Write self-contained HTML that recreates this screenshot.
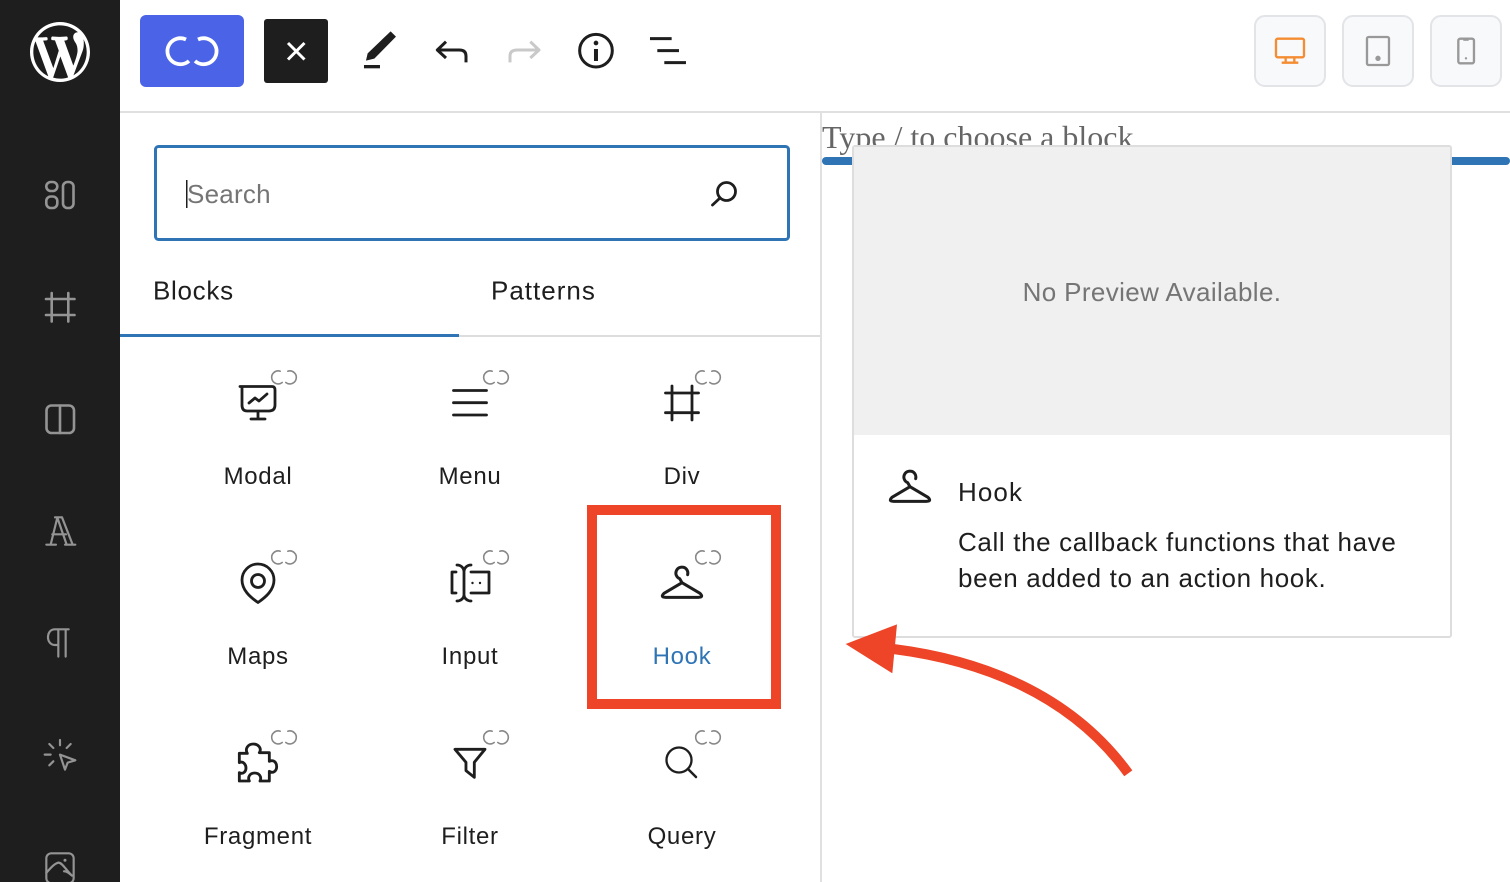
<!DOCTYPE html>
<html lang="en"><head><meta charset="utf-8"><title>Block inserter</title>
<style>
html,body{margin:0;padding:0;background:#fff;width:1510px;height:882px;overflow:hidden}
svg{display:block;position:absolute;left:0;top:0}
text{font-family:"Liberation Sans",sans-serif;fill:#1e1e1e}
.lb{font-size:24px;letter-spacing:.7px;text-anchor:middle;-webkit-text-stroke:.2px currentColor;color:#1e1e1e}
.tx{font-size:26px;letter-spacing:.64px;-webkit-text-stroke:.15px #1e1e1e}
.ic{fill:none;stroke:#1e1e1e;stroke-width:2.8;stroke-linecap:round;stroke-linejoin:round}
.z{fill:none;stroke:#1e1e1e;stroke-width:9;stroke-linejoin:round}
.sb{fill:none;stroke:#949494;stroke-width:2.6;stroke-linecap:round;stroke-linejoin:round}
.sz{fill:none;stroke:#949494;stroke-width:6.5;stroke-linecap:round;stroke-linejoin:round}
.lp{fill:none;stroke:#888;stroke-width:1.6;stroke-linecap:round}
</style></head><body>
<svg width="1510" height="882" viewBox="0 0 1510 882" xmlns="http://www.w3.org/2000/svg">
<defs>
<g id="loop"><path class="lp" d="M-3.800 -5.800A6.500 6.500 0 1 0 -1.800 5.500"/><path class="lp" d="M3.800 -5.800A6.500 6.500 0 1 1 1.800 5.500"/></g>
<g id="hook"><path class="z" transform="translate(580,500) scale(.3333)" stroke-linecap="round" d="M323 224A18 18 0 1 0 299 236L306 248L360 280Q372 292 355 292H257Q240 292 252 280L306 248"/></g>
</defs>

<!-- Sidebar -->
<rect x="0" y="0" width="120" height="882" fill="#1e1e1e"/>
<path transform="translate(30,22) scale(3)" fill="#fff" d="M20 10c0-5.51-4.49-10-10-10C4.48 0 0 4.49 0 10c0 5.52 4.48 10 10 10 5.51 0 10-4.48 10-10zM7.78 15.37L4.37 6.22c.55-.02 1.17-.08 1.17-.08.5-.06.44-1.13-.06-1.11 0 0-1.45.11-2.37.11-.18 0-.37 0-.58-.01C4.12 2.69 6.87 1.11 10 1.11c2.33 0 4.45.87 6.05 2.34-.68-.11-1.65.39-1.65 1.58 0 .74.45 1.36.9 2.1.35.61.55 1.36.55 2.46 0 1.49-1.4 5-1.4 5l-3.03-8.37c.54-.02.82-.17.82-.17.5-.05.44-1.25-.06-1.22 0 0-1.44.12-2.38.12-.87 0-2.33-.12-2.33-.12-.5-.03-.56 1.2-.06 1.22l.92.08 1.26 3.41zM17.41 10c.24-.64.74-1.87.43-4.25.7 1.29 1.05 2.71 1.05 4.25 0 3.29-1.73 6.24-4.4 7.78.97-2.59 1.94-5.2 2.92-7.78zM6.1 18.09C3.12 16.65 1.11 13.53 1.11 10c0-1.3.23-2.48.72-3.59C3.25 10.3 4.67 14.2 6.1 18.09zm4.03-6.63l2.58 6.98c-.86.29-1.76.45-2.71.45-.79 0-1.57-.11-2.29-.33.81-2.38 1.62-4.74 2.42-7.1z"/>
<rect class="sb" x="46.300" y="182" width="11" height="9" rx="4.500"/>
<rect class="sb" x="46.300" y="196.500" width="11" height="11.500" rx="4.500"/>
<rect class="sb" x="63" y="182" width="10.500" height="26" rx="4.500"/>
<path class="sb" d="M51.700 293V321.500M68.300 293V321.500M46 299H74.500M46 315H74.500"/>
<rect class="sb" x="46.500" y="405.500" width="27.500" height="27.500" rx="5"/><path class="sb" d="M60 405.500V433"/>
<g transform="translate(0,441) scale(.3333)">
<path class="sz" d="M139 311H168M195 311H226M152 311L172 230M165 229H186M172 230L200 311M186 229L218 311M157 280H198"/>
<path class="sz" d="M175 565V647M197 565V647M206 565H165C150 565 144 577 144 589C144 601 152 612 165 612H175"/>
<path class="sz" d="M180 897V913M148 909L160 921M212 909L200 921M134 941H152M148 973L160 961M180 941L226 958L203 965L195 986Z"/>
<rect class="sz" x="139" y="1237" width="82" height="90" rx="15"/>
<path class="sz" d="M139 1296C152 1280 165 1266 176 1265C188 1266 200 1290 216 1304C208 1297 200 1290 192 1291"/>
<circle cx="195" cy="1258" r="4.500" fill="#949494"/>
</g>

<!-- Top bar -->
<rect x="120" y="111" width="1390" height="2" fill="#e0e0e0"/>
<rect x="140" y="15" width="104" height="72" rx="6" fill="#4a63e7"/>
<path d="M186 39.500A13 13 0 1 0 189 61M198 39.500A13 13 0 1 1 195 61" fill="none" stroke="#fff" stroke-width="3.800"/>
<rect x="264" y="19" width="64" height="64" rx="3" fill="#1e1e1e"/>
<path d="M288 43L304.500 59.500M304.500 43L288 59.500" stroke="#fff" stroke-width="3"/>
<g transform="translate(130,0) scale(.3333)">
<path fill="#1e1e1e" d="M782 94L798 110L733 176L708 182L713 160Z"/><rect x="702" y="195" width="48" height="10" fill="#1e1e1e"/>
</g>
<g transform="translate(420,0) scale(.3333)">
<path class="z" d="M78 125L52 150L78 174M52 150H118Q138 150 138 168V187"/>
<path class="z" style="stroke:#c9c9c9" d="M331 125L357 150L331 174M357 150H292Q270 150 270 168V187"/>
<circle class="z" cx="528" cy="152" r="49"/><circle cx="528" cy="129" r="7" fill="#1e1e1e"/><rect x="522" y="147" width="12" height="36" fill="#1e1e1e"/>
<path class="z" d="M690 116H755M712 152H777M733 188H798"/>
</g>
<g fill="#f8f9fb" stroke="#e2e4e8" stroke-width="2">
<rect x="1255" y="16" width="70" height="70" rx="10"/><rect x="1343" y="16" width="70" height="70" rx="10"/><rect x="1431" y="16" width="70" height="70" rx="10"/>
</g>
<g transform="translate(1240,0) scale(.3333)" fill="none" stroke-width="7" stroke-linejoin="round">
<g stroke="#f48c32"><rect x="108" y="116" width="84" height="56" rx="5"/><path d="M137 172V188M163 172V188M125 188H175"/></g>
<g stroke="#999"><rect x="381" y="111" width="66" height="84" rx="5"/><rect x="655" y="116" width="47" height="74" rx="6"/><path d="M670 119H686"/></g>
<circle cx="414" cy="175" r="8" fill="#999"/><circle cx="678" cy="175" r="3.500" fill="#999"/>
</g>

<!-- Inserter -->
<rect x="820" y="113" width="2" height="769" fill="#e0e0e0"/>
<rect x="155.500" y="146.500" width="633" height="93" rx="3" fill="#fff" stroke="#2f74b5" stroke-width="3"/>
<rect x="186" y="180" width="1.500" height="28" fill="#1e1e1e"/>
<text x="187" y="203" style="font-size:26px;letter-spacing:.25px;fill:#757575">Search</text>
<circle class="ic" cx="726.500" cy="191.500" r="9"/><path class="ic" d="M720 198L712.500 205"/>
<text x="153" y="299.500" style="font-size:26px;letter-spacing:.7px;-webkit-text-stroke:.4px #1e1e1e">Blocks</text>
<text x="491" y="299.500" style="font-size:26px;letter-spacing:1px;-webkit-text-stroke:.4px #1e1e1e">Patterns</text>
<rect x="120" y="335" width="700" height="2" fill="#ddd"/>
<rect x="120" y="334" width="339" height="3" fill="#2f74b5"/>

<!-- grid -->
<use href="#loop" x="277.500" y="377" style="display:none"/>
<use href="#loop" x="284" y="377"/><use href="#loop" x="496" y="377"/><use href="#loop" x="708" y="377"/>
<use href="#loop" x="284" y="557"/><use href="#loop" x="496" y="557"/><use href="#loop" x="708" y="557"/>
<use href="#loop" x="284" y="737"/><use href="#loop" x="496" y="737"/><use href="#loop" x="708" y="737"/>

<text class="lb" x="258" y="484">Modal</text><text class="lb" x="470" y="484">Menu</text><text class="lb" x="682" y="484">Div</text>
<text class="lb" x="258" y="664">Maps</text><text class="lb" x="470" y="664">Input</text><text class="lb" x="682" y="664" style="fill:#2f74b5;color:#2f74b5">Hook</text>
<text class="lb" x="258" y="844">Fragment</text><text class="lb" x="470" y="844">Filter</text><text class="lb" x="682" y="844">Query</text>

<!-- Modal -->
<path class="ic" d="M240 386.500H272Q275 386.500 275 390V405Q275 411 269 411H247Q242 411 242 405V387M258 411V419M251 419H265M249 403L255 398L259 401L267 394"/>
<!-- Menu -->
<path class="ic" d="M453.500 390.500H486.500M453.500 402.700H486.500M453.500 415H486.500"/>
<!-- Div -->
<path class="ic" d="M672 386V420M692 386V420M665.500 393H698.500M665.500 412.700H698.500"/>
<!-- Maps -->
<path class="ic" d="M258 602.500C250 597 242 590 242 580A16 16 0 0 1 274 580C274 590 266 597 258 602.500Z"/><circle class="ic" cx="258" cy="581" r="6.500"/>
<!-- Input -->
<path class="ic" d="M457 565C461 565 464 568 464 572V595C464 598 461 601 457 601M471 565C467 565 464 568 464 572M464 595C464 598 467 601 471 601M456 572H452V593H456M471 572H489V593H471"/>
<circle cx="472.500" cy="583" r="1.200" fill="#1e1e1e"/><circle cx="480" cy="583" r="1.200" fill="#1e1e1e"/>
<!-- Hook -->
<use href="#hook"/>
<!-- Fragment -->
<path class="z" style="stroke-width:8.500" transform="translate(210,720) scale(.3333)" d="M88 100H112C104 86 114 72 130 72S156 86 148 98H178V124C192 118 200 128 200 140S190 162 178 154V183H150C156 171 148 159 134 159S112 171 118 183H88V158C100 164 108 154 108 144S100 122 88 128Z"/>
<!-- Filter -->
<path class="z" style="stroke-width:8.500" transform="translate(210,720) scale(.3333)" d="M735 88H825L793 127V172L768 152V127Z"/>
<!-- Query -->
<circle class="ic" style="stroke-width:2.300" cx="679" cy="760" r="12.500"/><path class="ic" style="stroke-width:2.500" d="M688 769L696 777"/>

<!-- Canvas -->
<text x="822" y="148" style="font-family:'Liberation Serif',serif;font-size:32px;fill:#666;-webkit-text-stroke:.2px #666">Type / to choose a block</text>
<rect x="822" y="157" width="688" height="8" rx="4" fill="#2f74b5"/>
<rect x="853" y="146" width="598" height="491" rx="2" fill="#fff" stroke="#ddd" stroke-width="2"/>
<rect x="854" y="147" width="596" height="288" fill="#f0f0f0"/>
<text x="1152" y="301" text-anchor="middle" style="font-size:26px;letter-spacing:.37px;fill:#757575">No Preview Available.</text>
<use href="#hook" x="228" y="-96"/>
<text x="958" y="501" style="font-size:26px;letter-spacing:1.1px;-webkit-text-stroke:.45px #1e1e1e">Hook</text>
<text class="tx" x="958" y="551">Call the callback functions that have</text>
<text class="tx" x="958" y="587">been added to an action hook.</text>

<!-- Annotations -->
<path d="M592 510H776V704H592Z" fill="none" stroke="#ee4427" stroke-width="10"/>
<g transform="translate(830,440) scale(.3333)">
<path d="M190 627C450 660 720 760 895 1000" fill="none" stroke="#ee4427" stroke-width="30"/>
<path d="M47 612L201 553L187 700Z" fill="#ee4427"/>
</g>
</svg>
</body></html>
